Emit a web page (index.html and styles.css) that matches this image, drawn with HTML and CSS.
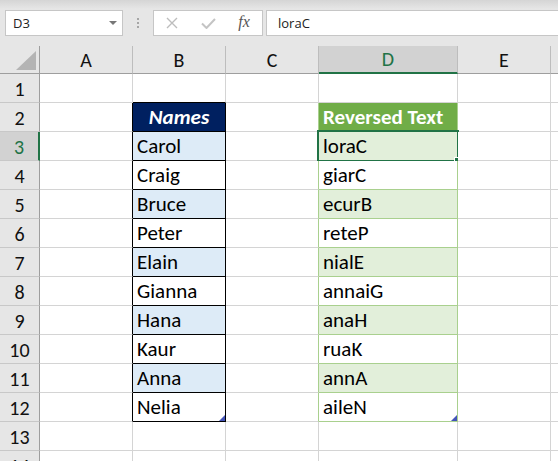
FILE: index.html
```html
<!DOCTYPE html>
<html lang="en">
<head>
    <meta charset="UTF-8">
    <title>Reverse Text</title>
    <link rel="stylesheet" href="styles.css">
</head>
<body>
    <div class="toolbar">
        <div class="namebox">
            <span>D3</span>
            <span class="caret"></span>
        </div>
        <div class="grip"><span></span><span></span><span></span></div>
        <div class="fbuttons">
            <div class="fbtn">
                <svg width="12" height="12" viewBox="0 0 12 12"><path d="M1 1 L11 11 M11 1 L1 11" stroke="#bdbdbd" stroke-width="1.4" fill="none"/></svg>
            </div>
            <div class="fbtn">
                <svg width="15" height="11" viewBox="0 0 15 11"><path d="M1 5.5 L5.5 10 L14 1" stroke="#c4c4c4" stroke-width="2" fill="none"/></svg>
            </div>
            <div class="fbtn fx">fx</div>
        </div>
        <div class="formula">loraC</div>
    </div>

    <div class="sheet" id="sheet">
        <!-- cells are built below -->
    </div>

    <script>
const names = ['Carol', 'Craig', 'Bruce', 'Peter', 'Elain', 'Gianna', 'Hana', 'Kaur', 'Anna', 'Nelia'];
const cols = ['A', 'B', 'C', 'D', 'E', ''];
const sheet = document.getElementById('sheet');

function addCell(cls, text) {
    const cell = document.createElement('div');
    cell.className = cls;
    if (text) cell.textContent = text;
    sheet.appendChild(cell);
    return cell;
}

function addHandle(cell) {
    const h = document.createElement('span');
    h.className = 'resize';
    cell.appendChild(h);
}

// column headers
addCell('corner');
cols.forEach(c => addCell(c === 'D' ? 'col-head active' : 'col-head', c));

for (let r = 1; r <= 14; r++) {
    addCell(r === 3 ? 'row-head active' : 'row-head', String(r));
    const inTable = r >= 2 && r <= 12;
    const name = names[r - 3];
    const odd = r % 2 === 1;

    // A
    addCell(inTable ? 'cell edge-names' : 'cell');

    // B - names table
    let b;
    if (r === 1) b = addCell('cell top-names');
    else if (r === 2) b = addCell('cell names-head', 'Names');
    else if (inTable) b = addCell(odd ? 'cell names stripe-blue' : 'cell names', name);
    else b = addCell('cell');
    if (r === 12) addHandle(b);

    // C
    addCell(inTable ? 'cell edge-rev' : 'cell');

    // D - reversed text
    let d;
    if (r === 2) d = addCell('cell rev-head', 'Reversed Text');
    else if (inTable) d = addCell(odd ? 'cell rev stripe-green' : 'cell rev', name.split('').reverse().join(''));
    else d = addCell('cell');
    if (r === 12) addHandle(d);
    if (r === 3) {
        const sel = document.createElement('span');
        sel.className = 'selection';
        d.appendChild(sel);
    }

    // E, F
    addCell('cell');
    addCell('cell');
}
    </script>
</body>
</html>
```

FILE: styles.css
```css
body {
    margin: 0;
    padding: 0;
    width: 558px;
    height: 461px;
    overflow: hidden;
    background-color: #fff;
    font-family: "Open Sans", sans-serif;
}
.toolbar {
    height: 46px;
    box-sizing: border-box;
    padding: 10px 0 0 5px;
    display: flex;
    align-items: flex-start;
    background: linear-gradient(#d5d5d5, #e6e6e6 9px);
}
.namebox {
    width: 118px;
    height: 26px;
    box-sizing: border-box;
    background-color: #fff;
    border: 1px solid #c6c6c6;
    padding: 0 5px 0 7px;
    display: flex;
    align-items: center;
    justify-content: space-between;
    font-size: 13px;
    color: #222;
}
.caret {
    width: 0;
    height: 0;
    border-left: 4px solid transparent;
    border-right: 4px solid transparent;
    border-top: 4px solid #777;
}
.grip {
    width: 30px;
    height: 26px;
    display: flex;
    flex-direction: column;
    align-items: center;
    justify-content: center;
    gap: 2px;
}
.grip span {
    width: 2px;
    height: 2px;
    background-color: #a6a6a6;
}
.fbuttons {
    width: 110px;
    height: 26px;
    box-sizing: border-box;
    background-color: #fff;
    border: 1px solid #c6c6c6;
    display: flex;
}
.fbtn {
    width: 36px;
    display: flex;
    align-items: center;
    justify-content: center;
}
.fx {
    font-family: "Liberation Serif", serif;
    font-style: italic;
    font-size: 16px;
    color: #555;
    padding-bottom: 2px;
}
.formula {
    flex: 1;
    height: 26px;
    margin-left: 3px;
    box-sizing: border-box;
    background-color: #fff;
    border: 1px solid #c6c6c6;
    border-right: none;
    padding-left: 11px;
    font-size: 13px;
    line-height: 24px;
    color: #222;
}
.sheet {
    display: grid;
    grid-template-columns: 40px 93px 93px 93px 139px 93px 1fr;
    grid-template-rows: 28px repeat(14, 29px);
    font-family: Carlito, Lato, sans-serif;
    font-size: 21px;
}
.corner {
    position: relative;
    background-color: #e6e6e6;
    border-right: 1px solid #9e9e9e;
    border-bottom: 1px solid #9e9e9e;
}
.corner::after {
    content: "";
    position: absolute;
    right: 3px;
    bottom: 3px;
    width: 20px;
    height: 19px;
    background-color: #b4b4b4;
    clip-path: polygon(100% 0, 100% 100%, 0 100%);
}
.col-head {
    background-color: #e6e6e6;
    border-right: 1px solid #bdbdbd;
    border-bottom: 1px solid #9e9e9e;
    display: flex;
    align-items: center;
    justify-content: center;
    font-size: 20px;
    color: #111;
}
.row-head {
    background-color: #e6e6e6;
    border-right: 1px solid #9e9e9e;
    border-bottom: 1px solid #c8c8c8;
    display: flex;
    align-items: flex-end;
    justify-content: center;
    font-size: 20px;
    line-height: 20px;
    padding-bottom: 3px;
    color: #111;
}
.col-head.active {
    background-color: #d2d2d2;
    color: #217346;
    border-bottom: 2px solid #217346;
}
.row-head.active {
    background-color: #d2d2d2;
    color: #217346;
    border-right: 2px solid #217346;
}
.cell {
    position: relative;
    background-color: #fff;
    border-right: 1px solid #d4d4d4;
    border-bottom: 1px solid #d4d4d4;
    padding: 0 4px 3px;
    display: flex;
    align-items: flex-end;
    line-height: 21px;
    white-space: nowrap;
    color: #000;
}
.edge-names {
    border-right-color: #000;
}
.top-names {
    border-bottom-color: #000;
}
.names {
    border-right-color: #000;
    border-bottom-color: #000;
}
.names-head {
    background-color: #002060;
    color: #fff;
    font-weight: bold;
    font-style: italic;
    justify-content: center;
    border-right-color: #000;
    border-bottom-color: #000;
}
.stripe-blue {
    background-color: #ddebf7;
}
.edge-rev {
    border-right-color: #a9d08e;
}
.rev {
    border-right-color: #a9d08e;
    border-bottom-color: #a9d08e;
}
.rev-head {
    background-color: #70ad47;
    color: #fff;
    font-weight: bold;
    border-right-color: #a9d08e;
}
.stripe-green {
    background-color: #e2efda;
}
.resize {
    position: absolute;
    right: 0;
    bottom: 0;
    width: 6px;
    height: 6px;
    background-color: #4454b8;
    clip-path: polygon(100% 0, 100% 100%, 0 100%);
}
.selection {
    position: absolute;
    left: -2px;
    top: -2px;
    right: -2px;
    bottom: -2px;
    border: 2px solid #217346;
}
.selection::after {
    content: "";
    position: absolute;
    right: -4px;
    bottom: -4px;
    width: 5px;
    height: 5px;
    background-color: #217346;
    border: 1px solid #fff;
}
```
